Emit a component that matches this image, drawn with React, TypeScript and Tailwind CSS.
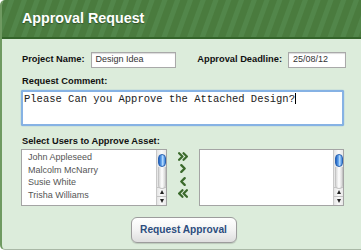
import React from "react";

function ScrollBar() {
  return (
    <div className="w-[10px] h-full flex flex-col border-l border-[#c8c8c8] bg-[linear-gradient(90deg,#e4e4e4,#fafafa_50%,#e8e8e8)]">
      <div className="flex-1 relative">
        <div className="absolute left-[1px] top-[4px] w-[8px] h-[13px] rounded-full border border-[#2a63b0] bg-[linear-gradient(90deg,#1f5fc2,#6fb0f2_45%,#b8dcff_60%,#3f86dc)]" />
        <div className="absolute left-[1px] top-[17px] w-[8px] h-[22px] rounded-b-full bg-[linear-gradient(90deg,#d8d8d8,#ffffff_50%,#d8d8d8)] border border-t-0 border-[#c4c4c4]" />
      </div>
      <div className="h-[9px] border-t border-[#c4c4c4] flex items-center justify-center">
        <div className="w-0 h-0 border-l-[2.5px] border-r-[2.5px] border-b-[4px] border-l-transparent border-r-transparent border-b-[#222]" />
      </div>
      <div className="h-[9px] border-t border-[#c4c4c4] flex items-center justify-center">
        <div className="w-0 h-0 border-l-[2.5px] border-r-[2.5px] border-t-[4px] border-l-transparent border-r-transparent border-t-[#222]" />
      </div>
    </div>
  );
}

function Chevron({ dir, double }: { dir: "l" | "r"; double?: boolean }) {
  const pts = dir === "r" ? ["1,1 4,4 1,7", "5,1 8,4 5,7"] : ["8,1 5,4 8,7", "4,1 1,4 4,7"];
  return (
    <svg width={double ? 10 : 6} height="9" viewBox={double ? "0 0 9 8" : (dir === "r" ? "0 0 5 8" : "4 0 5 8")}>
      <polyline points={pts[0]} fill="none" stroke="#3b6a2c" strokeWidth="2" strokeLinecap="round" strokeLinejoin="round" />
      {double && <polyline points={pts[1]} fill="none" stroke="#3b6a2c" strokeWidth="2" strokeLinecap="round" strokeLinejoin="round" />}
    </svg>
  );
}

export default function App() {
  const users = ["John Appleseed", "Malcolm McNarry", "Susie White", "Trisha Williams"];
  return (
    <div className="w-[361px] h-[251px] bg-white font-['Liberation_Sans',Arial,sans-serif]">
      <div className="h-[250px] flex flex-col rounded-l-[5px] border-l-2 border-b border-l-[#6f9a61] border-b-[#a9b8a6] bg-[#dcecdb] overflow-hidden">
        <div className="h-[39px] shrink-0 flex items-center pl-[20px] pb-[1px] border-b-2 border-[#34642a] bg-[repeating-linear-gradient(110deg,#4a7b3e_0px,#4a7b3e_6px,#52864a_7px,#52864a_11px,#4a7b3e_12px)]">
          <span className="text-white font-bold text-[14.3px] leading-none [text-shadow:0_1px_1px_rgba(0,0,0,0.35)]">
            Approval Request
          </span>
        </div>
        <div className="flex flex-col pl-[19px] pr-[15px] pt-[13px]">
          <div className="flex items-center h-[16px]">
            <span className="ml-[1px] text-[9.3px] font-bold text-[#111]">Project Name:</span>
            <div className="ml-[6px] w-[85px] h-[16px] bg-white border border-[#a9a9a9] shadow-[inset_0_1px_1px_rgba(0,0,0,0.15)] flex items-center pl-[4px] text-[9px] text-[#333]">
              Design Idea
            </div>
            <span className="ml-auto text-[9.3px] font-bold text-[#111]">Approval Deadline:</span>
            <div className="ml-[6px] w-[58px] h-[16px] bg-white border border-[#a9a9a9] shadow-[inset_0_1px_1px_rgba(0,0,0,0.15)] flex items-center pl-[4px] text-[9px] text-[#333]">
              25/08/12
            </div>
          </div>
          <div className="mt-[8px] ml-[1px] h-[11px] leading-[11px] text-[9.3px] font-bold text-[#111]">Request Comment:</div>
          <div className="mt-[3px] mr-[2px] h-[36px] bg-white border-2 border-[#86b2e4] rounded-[2px] shadow-[0_0_1px_#4a8ad6] px-[1px] pt-[1px] font-['Liberation_Mono','Courier_New',monospace] text-[10.5px] leading-[12px] text-[#222] whitespace-nowrap">
            <span>Please Can you Approve the Attached Design?</span>
            <span className="inline-block w-[1px] h-[11px] bg-black align-[-2px]" />
          </div>
          <div className="mt-[10px] ml-[1px] h-[11px] leading-[11px] text-[9.3px] font-bold text-[#111]">Select Users to Approve Asset:</div>
          <div className="mt-[2px] mr-[2px] flex h-[57px]">
            <div className="w-[146px] h-full flex bg-white border border-[#a4a4a4]">
              <div className="flex-1 flex flex-col pl-[6px] pt-[1px]">
                {users.map((u) => (
                  <div key={u} className="h-[12.5px] leading-[12.5px] text-[9px] text-[#555]">{u}</div>
                ))}
              </div>
              <ScrollBar />
            </div>
            <div className="w-[32px] flex flex-col items-center pt-[1px]">
              <div className="h-[12.5px] flex items-center"><Chevron dir="r" double /></div>
              <div className="h-[12.5px] flex items-center"><Chevron dir="r" /></div>
              <div className="h-[12.5px] flex items-center"><Chevron dir="l" /></div>
              <div className="h-[12.5px] flex items-center"><Chevron dir="l" double /></div>
            </div>
            <div className="flex-1 h-full flex bg-white border border-[#a4a4a4]">
              <div className="flex-1" />
              <ScrollBar />
            </div>
          </div>
          <div className="mt-[11px] flex justify-center">
            <div className="w-[106px] h-[26px] rounded-[6px] border border-[#9c9c9c] bg-[linear-gradient(#ffffff,#f3f3f3_50%,#dedede)] shadow-[0_1px_1px_rgba(0,0,0,0.15)] flex items-center justify-center text-[10.2px] font-bold text-[#2c4d7e]">
              Request Approval
            </div>
          </div>
        </div>
      </div>
    </div>
  );
}
